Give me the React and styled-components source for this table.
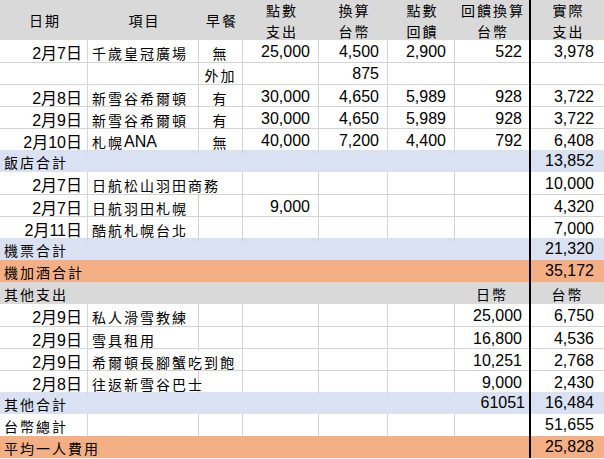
import React from "react";
import styled, { createGlobalStyle } from "styled-components";

const GlobalStyle = createGlobalStyle`
  html, body {
    margin: 0;
    padding: 0;
    background: #fff;
  }
  body {
    font-family: "Liberation Sans", "Noto Sans CJK TC", sans-serif;
    color: #000;
  }
`;

const COLS = "88px 111px 44px 76px 69px 67px 76px 73px";
const GRID = "#d4d4d4";
const FILLS = {
  white: "#ffffff",
  grey: "#d9d9d9",
  blue: "#d9e1f2",
  orange: "#f4b084"
};

const Sheet = styled.div`
  width: 604px;
  height: 459px;
  overflow: hidden;
  background: #fff;
`;

const Row = styled.div`
  display: grid;
  grid-template-columns: ${COLS};
  height: ${props => props.$height || 22}px;
  box-sizing: border-box;
  background: ${props => FILLS[props.$fill || "white"]};
  border-top: ${props => (props.$line ? `1px solid ${GRID}` : "none")};
`;

const Cell = styled.div`
  box-sizing: border-box;
  display: flex;
  align-items: center;
  justify-content: ${props =>
    props.$align === "left"
      ? "flex-start"
      : props.$align === "center"
      ? "center"
      : "flex-end"};
  grid-column: span ${props => props.$span || 1};
  padding-left: ${props => props.$pl || 0}px;
  padding-right: ${props => props.$pr || 0}px;
  border-right: ${props =>
    props.$edge
      ? "2px solid #000"
      : props.$grid
      ? `1px solid ${GRID}`
      : "none"};
  font-size: 16px;
  white-space: nowrap;
  overflow: visible;
`;

const HeadText = styled.div`
  font-family: "Noto Sans CJK TC", sans-serif;
  font-size: 14px;
  letter-spacing: 2px;
  margin-right: -2px;
  line-height: 20.5px;
  text-align: center;
`;

const Zh = styled.span`
  font-family: "Noto Sans CJK TC", sans-serif;
  font-size: 14px;
  letter-spacing: 2px;
  padding-top: 2px;
`;

const Latin = styled.span`
  font-family: "Liberation Sans", sans-serif;
  font-size: 16px;
  padding-top: 1px;
`;

const headers = [
  ["日期"],
  ["項目"],
  ["早餐"],
  ["點數", "支出"],
  ["換算", "台幣"],
  ["點數", "回饋"],
  ["回饋換算", "台幣"],
  ["實際", "支出"]
];

const items1 = [
  { date: "2月7日", name: "千歲皇冠廣場", bf: "無", d: "25,000", e: "4,500", f: "2,900", g: "522", h: "3,978" },
  { bf: "外加", e: "875", line: true },
  { date: "2月8日", name: "新雪谷希爾頓", bf: "有", d: "30,000", e: "4,650", f: "5,989", g: "928", h: "3,722", line: true },
  { date: "2月9日", name: "新雪谷希爾頓", bf: "有", d: "30,000", e: "4,650", f: "5,989", g: "928", h: "3,722", line: true },
  { date: "2月10日", name: "札幌", latin: "ANA", bf: "無", d: "40,000", e: "7,200", f: "4,400", g: "792", h: "6,408", line: true }
];

const items2 = [
  { date: "2月7日", name: "日航松山羽田商務", wide: true, h: "10,000" },
  { date: "2月7日", name: "日航羽田札幌", d: "9,000", h: "4,320", line: true },
  { date: "2月11日", name: "酷航札幌台北", h: "7,000", line: true }
];

const items3 = [
  { date: "2月9日", name: "私人滑雪教練", g: "25,000", h: "6,750" },
  { date: "2月9日", name: "雪具租用", g: "16,800", h: "4,536", line: true },
  { date: "2月9日", name: "希爾頓長腳蟹吃到飽", wide: true, g: "10,251", h: "2,768", line: true },
  { date: "2月8日", name: "往返新雪谷巴士", g: "9,000", h: "2,430", line: true }
];

function HeaderRow() {
  return (
    <Row $height={40} $fill="grey">
      {headers.map((lines, i) => (
        <Cell key={i} $align="center" $edge={i === 6}>
          <HeadText>
            {lines.map(line => (
              <div key={line}>{line}</div>
            ))}
          </HeadText>
        </Cell>
      ))}
    </Row>
  );
}

function ItemRow({ item }) {
  return (
    <Row $line={item.line}>
      <Cell $grid $pr={5}>
        {item.date}
      </Cell>
      <Cell $grid $align="left" $pl={4} $span={item.wide ? 2 : 1}>
        {item.name && <Zh>{item.name}</Zh>}
        {item.latin && <Latin>{item.latin}</Latin>}
      </Cell>
      {!item.wide && (
        <Cell $grid $align="center">
          {item.bf && <Zh>{item.bf}</Zh>}
        </Cell>
      )}
      <Cell $grid $pr={8}>
        {item.d}
      </Cell>
      <Cell $grid $pr={8}>
        {item.e}
      </Cell>
      <Cell $grid $pr={8}>
        {item.f}
      </Cell>
      <Cell $edge $pr={7}>
        {item.g}
      </Cell>
      <Cell $pr={10}>{item.h}</Cell>
    </Row>
  );
}

function SumRow({ fill, label, g, gZh, h, hZh }) {
  const split = g !== undefined || gZh !== undefined;
  return (
    <Row $fill={fill}>
      <Cell $align="left" $pl={4} $span={split ? 6 : 7} $edge={!split}>
        <Zh>{label}</Zh>
      </Cell>
      {split && (
        <Cell $edge $align={gZh ? "center" : "right"} $pr={gZh ? 0 : 4}>
          {gZh ? <Zh>{gZh}</Zh> : g}
        </Cell>
      )}
      <Cell $align={hZh ? "center" : "right"} $pr={hZh ? 0 : 10}>
        {hZh ? <Zh>{hZh}</Zh> : h}
      </Cell>
    </Row>
  );
}

function TotalRow({ label, h }) {
  return (
    <Row>
      <Cell $grid $align="left" $pl={4}>
        <Zh>{label}</Zh>
      </Cell>
      <Cell $grid />
      <Cell $grid />
      <Cell $grid />
      <Cell $grid />
      <Cell $grid />
      <Cell $edge />
      <Cell $pr={10}>{h}</Cell>
    </Row>
  );
}

export default function App() {
  return (
    <Sheet>
      <GlobalStyle />
      <HeaderRow />
      {items1.map((item, i) => (
        <ItemRow key={"a" + i} item={item} />
      ))}
      <SumRow fill="blue" label="飯店合計" h="13,852" />
      {items2.map((item, i) => (
        <ItemRow key={"b" + i} item={item} />
      ))}
      <SumRow fill="blue" label="機票合計" h="21,320" />
      <SumRow fill="orange" label="機加酒合計" h="35,172" />
      <SumRow fill="grey" label="其他支出" gZh="日幣" hZh="台幣" />
      {items3.map((item, i) => (
        <ItemRow key={"c" + i} item={item} />
      ))}
      <SumRow fill="blue" label="其他合計" g="61051" h="16,484" />
      <TotalRow label="台幣總計" h="51,655" />
      <SumRow fill="orange" label="平均一人費用" h="25,828" />
    </Sheet>
  );
}
